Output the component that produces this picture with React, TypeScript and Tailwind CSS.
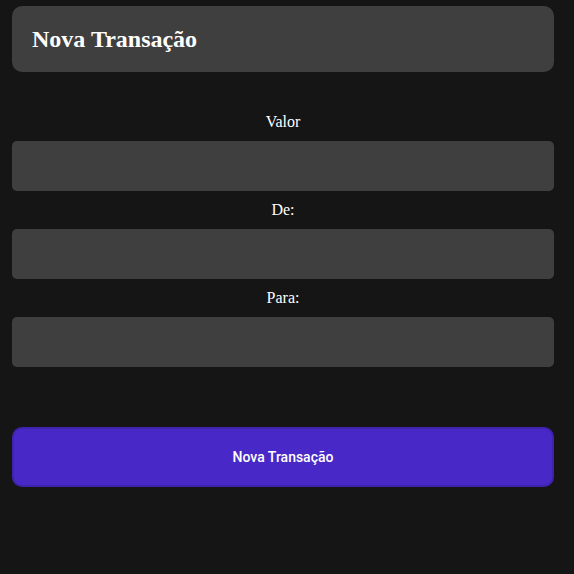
export default function App() {
  const fields = ['Valor', 'De:', 'Para:'];
  return (
    <div className="min-h-[574px] w-full bg-[#161516] pt-[6px]">
      <div className="ml-3 w-[542px]">
        <div className="flex h-[66px] items-center rounded-[10px] bg-[#3f3f3f] px-5">
          <h2 className="font-['Liberation_Serif',serif] text-2xl font-bold text-white">
            Nova Transação
          </h2>
        </div>
        <form className="mt-[41px] flex flex-col">
          {fields.map((f, i) => (
            <div key={f} className={i > 0 ? 'mt-[10px] flex flex-col' : 'flex flex-col'}>
              <label className="mb-[10px] text-center font-['Liberation_Serif',serif] text-base leading-[18px] text-white">
                {f}
              </label>
              <input className="h-[50px] rounded-[5px] bg-[#3f3f3f] px-3 text-white outline-none" />
            </div>
          ))}
          <button
            type="button"
            className="mt-[60px] h-[60px] rounded-[10px] border-2 border-[#3f23ad] bg-[#4829c7] font-['Roboto',sans-serif] text-sm font-medium text-white"
          >
            Nova Transação
          </button>
        </form>
      </div>
    </div>
  );
}
